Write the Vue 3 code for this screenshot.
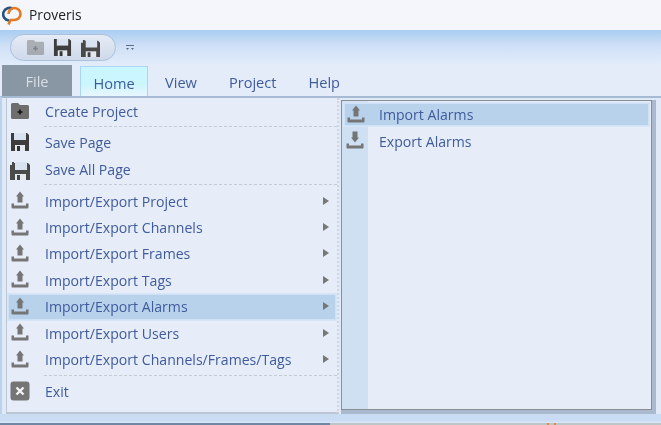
<script setup>
const groups = [
  [{ label: 'Create Project', icon: 'folder', h: 28 }],
  [
    { label: 'Save Page', icon: 'save', h: 26 },
    { label: 'Save All Page', icon: 'saveall', h: 27 }
  ],
  [
    { label: 'Import/Export Project', icon: 'up', arrow: true },
    { label: 'Import/Export Channels', icon: 'up', arrow: true },
    { label: 'Import/Export Frames', icon: 'up', arrow: true },
    { label: 'Import/Export Tags', icon: 'up', arrow: true },
    { label: 'Import/Export Alarms', icon: 'up', arrow: true, active: true },
    { label: 'Import/Export Users', icon: 'up', arrow: true },
    { label: 'Import/Export Channels/Frames/Tags', icon: 'up', arrow: true }
  ],
  [{ label: 'Exit', icon: 'exit', h: 25 }]
]
const tabs = ['Home', 'View', 'Project', 'Help']
const sub = [
  { label: 'Import Alarms', icon: 'up', active: true },
  { label: 'Export Alarms', icon: 'down' }
]
</script>

<template>
  <div class="app">
    <svg class="defs" width="0" height="0" aria-hidden="true">
      <symbol id="folder" viewBox="0 0 20 20">
        <path d="M1 3.500Q1 2 2.500 2H8l2 2h7.500Q19 4 19 5.500V16.500Q19 18 17.500 18H2.500Q1 18 1 16.500Z" fill="#6e6e6e"/>
        <path d="M7.500 11h5M10 8.500v5" stroke="#111" stroke-width="1.600"/>
      </symbol>
      <symbol id="save" viewBox="0 0 20 20">
        <path d="M1 1h16l2 2v16H1Z" fill="#3d3d3d"/>
        <path d="M4 1h12v7H4Z" fill="#d9e2f0"/>
        <path d="M5 13h10v6H5Z" fill="#e4e8ef"/>
        <path d="M7 14h3v5H7Z" fill="#333"/>
      </symbol>
      <symbol id="saveall" viewBox="0 0 22 20">
        <path d="M1 5h2V2h2v1h14l2 2v15H1Z" fill="#4a4a4a"/>
        <path d="M6 2h12v8H6Z" fill="#d9e2f0"/>
        <path d="M6 14h11v6H6Z" fill="#e4e8ef"/>
        <path d="M8 15h3v5H8Z" fill="#444"/>
      </symbol>
      <symbol id="up" viewBox="0 0 20 20">
        <path d="M10 0.500 14 5.500H12.500V11.500H7.500V5.500H6Z" fill="#757575"/>
        <path d="M1.500 12.500h2.500v2h12v-2h2.500v4q0 1-1 1h-15q-1 0-1-1Z" fill="#757575"/>
      </symbol>
      <symbol id="down" viewBox="0 0 20 20">
        <path d="M10 11.500 14 6.500H12.500V0.500H7.500V6.500H6Z" fill="#757575"/>
        <path d="M1.500 12.500h2.500v2h12v-2h2.500v4q0 1-1 1h-15q-1 0-1-1Z" fill="#757575"/>
      </symbol>
      <symbol id="exit" viewBox="0 0 20 20">
        <rect x="0.500" y="0.500" width="19" height="19" rx="3" fill="#757575"/>
        <path d="M6.500 6.500 13.500 13.500M13.500 6.500 6.500 13.500" stroke="#f4f4f4" stroke-width="2.400"/>
      </symbol>
    </svg>

    <header class="title">
      <svg class="logo" viewBox="0 0 20 20" aria-hidden="true">
        <path d="M7 15.500A6.300 6.300 0 1 1 11 4" fill="none" stroke="#27527f" stroke-width="2.600"/>
        <path d="M6.500 9A6 6 0 1 1 12 15H8.500L6.500 19.500" fill="none" stroke="#e67a22" stroke-width="2.600"/>
      </svg>
      <span>Proveris</span>
    </header>

    <div class="quick">
      <div class="pill">
        <svg class="qi faded"><use href="#folder"/></svg>
        <svg class="qi"><use href="#save"/></svg>
        <svg class="qi wide"><use href="#saveall"/></svg>
      </div>
      <svg class="more" viewBox="0 0 10 8" aria-hidden="true">
        <path d="M1 1.500H9" stroke="#5d6d8c"/>
        <path d="M1 4H4L2.500 6ZM6 4H9L7.500 6Z" fill="#5d6d8c"/>
      </svg>
    </div>

    <nav class="tabs">
      <div class="file">File</div>
      <div v-for="(t, i) in tabs" :key="t" class="tab" :class="{ current: i === 0 }">{{ t }}</div>
    </nav>

    <main class="panel">
      <div class="menu">
        <section v-for="(g, gi) in groups" :key="gi" class="group">
          <div
            v-for="item in g"
            :key="item.label"
            class="row"
            :class="{ active: item.active }"
            :style="item.h ? { height: item.h + 'px' } : null"
          >
            <svg class="ico" :class="item.icon"><use :href="'#' + item.icon"/></svg>
            <span class="lbl">{{ item.label }}</span>
            <i v-if="item.arrow" class="arrow"></i>
          </div>
        </section>
      </div>
      <div class="submenu">
        <div v-for="s in sub" :key="s.label" class="row subrow" :class="{ active: s.active }">
          <svg class="ico"><use :href="'#' + s.icon"/></svg>
          <span class="lbl">{{ s.label }}</span>
        </div>
      </div>
    </main>
    <div class="foot"></div>
    <div class="strip"></div>
  </div>
</template>

<style scoped>
.app {
  width: 661px;
  height: 425px;
  overflow: hidden;
  display: flex;
  flex-direction: column;
  font-family: "Open Sans", "Noto Sans", sans-serif;
  font-size: 14px;
  background: #f1f5fb;
  filter: blur(0.35px);
}
.defs { position: absolute; }
.title {
  height: 30px;
  flex: none;
  box-sizing: border-box;
  padding: 0 0 1px 2px;
  display: flex;
  align-items: center;
  gap: 7px;
  color: #222;
  font-size: 13.800px;
  background: #f4f6fb;
}
.logo { width: 20px; height: 20px; }
.quick {
  height: 35px;
  flex: none;
  display: flex;
  align-items: center;
  gap: 9px;
  padding-left: 10px;
  background: linear-gradient(#a9cdf2, #cfe0f6 45%, #e2ecfa);
}
.pill {
  width: 106px;
  height: 27px;
  box-sizing: border-box;
  border: 1px solid #a9c0de;
  border-radius: 14px;
  background: linear-gradient(#e6ecf6, #cfd9e9);
  display: flex;
  align-items: center;
  gap: 8px;
  padding-left: 15px;
}
.qi { width: 19px; height: 19px; }
.qi.faded { opacity: 0.45; }
.qi.wide { width: 21px; }
.more { width: 10px; height: 8px; }
.tabs {
  height: 31px;
  flex: none;
  display: flex;
  color: #3f5b9c;
  background: #e4ecf9;
  font-size: 14.600px;
}
.file {
  width: 70px;
  margin-left: 2px;
  background: #8996a3;
  color: #d9dee4;
  display: flex;
  align-items: center;
  justify-content: center;
  padding-top: 1px;
  box-sizing: border-box;
}
.tab {
  padding: 3px 16px 0;
  display: flex;
  align-items: center;
}
.tab:nth-child(3) { margin-left: 1px; }
.tab.current {
  width: 68px;
  box-sizing: border-box;
  margin: 1px 0 0 8px;
  padding: 2px 0 0;
  justify-content: center;
  border: 1px solid #a9d6f7;
  border-bottom: 0;
  background: linear-gradient(#ccf6ff, #ccf6ff 60%, #e8f6ff);
}
.panel {
  height: 318px;
  flex: none;
  box-sizing: border-box;
  border-top: 2px solid #a7bad3;
  border-left: 2px solid #bcd3ee;
  display: flex;
  background: #dfe9f7;
}
.menu {
  width: 333px;
  flex: none;
  margin-left: 4px;
  box-sizing: border-box;
  border-left: 1px solid #bcc8d6;
  border-bottom: 2px solid #bcc6d2;
  border-right: 2px dotted #d0d5dd;
  background: #e6edf9;
}
.group:nth-child(2) { padding-bottom: 1px; }
.group:nth-child(3) { padding-bottom: 2px; }
.group:nth-child(-n+2) .row:first-of-type { padding-bottom: 1.500px; }
.group + .group::before {
  content: "";
  display: block;
  height: 0;
  margin: 0 0 3px 37px;
  border-top: 1px dashed #c6ccd6;
}
.row {
  height: 26.400px;
  display: flex;
  align-items: center;
  box-sizing: border-box;
  position: relative;
}
.active {
  background: #b9d2ec;
  box-shadow: inset 0 0 0 1px #cfe1f5, 0 0 0 1px #d6e6f8;
  margin: 0 1px;
}
.ico {
  width: 20px;
  height: 20px;
  margin-left: 3px;
  flex: none;
}
.ico.saveall { width: 22px; margin-left: 2px; margin-right: -1px; }
.active .ico { margin-left: 2px; }
.lbl {
  margin-left: 15px;
  color: #3f5b9c;
  font-size: 14.100px;
}
.arrow {
  position: absolute;
  right: 8px;
  top: 50%;
  margin-top: -4.500px;
  border-left: 6px solid #777;
  border-top: 4.500px solid transparent;
  border-bottom: 4.500px solid transparent;
}
.active .arrow { right: 7px; }
.submenu {
  flex: none;
  width: 311px;
  margin: 2px 0 0 2px;
  height: 310px;
  box-sizing: border-box;
  border: 1px solid #8b8f94;
  box-shadow: 0 4px 0 #aab9cd, 4px 0 0 #aab9cd, 4px 4px 0 #aab9cd;
  background: linear-gradient(90deg, #cfe0f2 26px, #e6edf9 26px);
  padding: 2px 1px 0;
}
.subrow { height: 23px; margin-bottom: 3.500px; }
.subrow .lbl { margin-left: 14px; }
.subrow.active .lbl { margin-left: 13px; }
.subrow .ico { margin-left: 2px; }
.foot {
  height: 9px;
  flex: none;
  background: linear-gradient(#c9dcf4 70%, #dbe7f8);
}
.strip {
  flex: 1;
  background:
    linear-gradient(90deg, #6f87a3 0 330px, #bcc6c6 330px 547px, #e08a45 547px 549px, #bcc6c6 549px 554px, #e08a45 554px 556px, #bcc6c6 556px);
}
</style>
